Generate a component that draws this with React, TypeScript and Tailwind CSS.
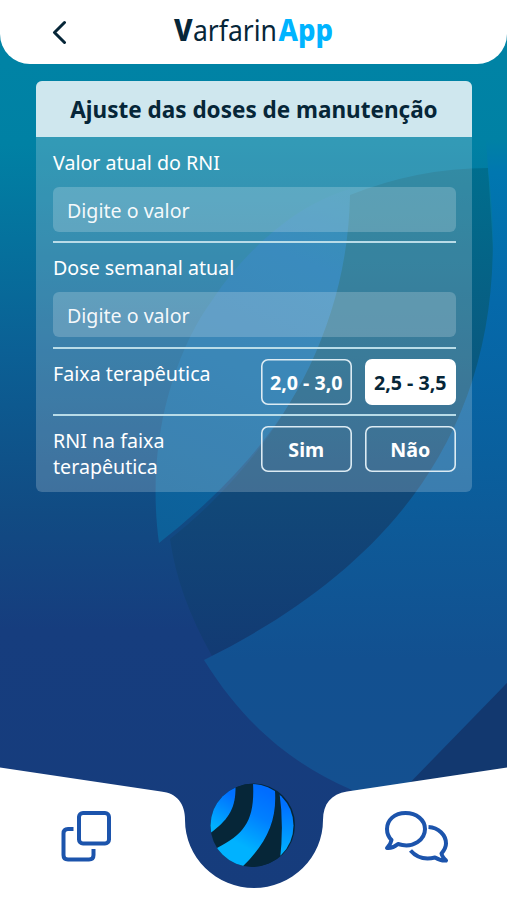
import type { ReactNode } from "react";

function Backdrop() {
  return (
    <svg className="absolute inset-0" width="507" height="900" viewBox="0 0 507 900" fill="none">
      <defs>
        <linearGradient id="sea" x1="0" y1="0" x2="0" y2="900" gradientUnits="userSpaceOnUse">
          <stop offset="0.07" stopColor="#0083a5" />
          <stop offset="0.16" stopColor="#0081a4" />
          <stop offset="0.39" stopColor="#0b6095" />
          <stop offset="0.57" stopColor="#114b83" />
          <stop offset="0.7" stopColor="#163d7e" />
          <stop offset="1" stopColor="#163c7c" />
        </linearGradient>
        <linearGradient id="stripeA" x1="330" y1="190" x2="180" y2="540" gradientUnits="userSpaceOnUse">
          <stop offset="0" stopColor="#0877b4" stopOpacity="0.3" />
          <stop offset="0.2" stopColor="#096fae" />
          <stop offset="1" stopColor="#0d6099" />
        </linearGradient>
        <linearGradient id="shade" x1="0" y1="168" x2="0" y2="660" gradientUnits="userSpaceOnUse">
          <stop offset="0" stopColor="#006e8e" />
          <stop offset="0.38" stopColor="#095a80" />
          <stop offset="0.67" stopColor="#114878" />
          <stop offset="1" stopColor="#123a73" />
        </linearGradient>
        <linearGradient id="stripeB" x1="0" y1="140" x2="0" y2="790" gradientUnits="userSpaceOnUse">
          <stop offset="0" stopColor="#0081a5" />
          <stop offset="0.05" stopColor="#0077b0" />
          <stop offset="0.25" stopColor="#0569aa" />
          <stop offset="0.5" stopColor="#0a5f9d" />
          <stop offset="0.62" stopColor="#0e5997" />
          <stop offset="0.8" stopColor="#125090" />
          <stop offset="1" stopColor="#145090" />
        </linearGradient>
      </defs>
      <rect width="507" height="900" fill="url(#sea)" />
      <path d="M350 189C290 206 238 260 211 302C176 350 145 440 159 543C235 483 353 372 350 189Z" fill="url(#stripeA)" />
      <path d="M488 168Q418 168 350 195C347 363 245 480 170 539Q178 596 212 656L400 560L500 360Z" fill="url(#shade)" />
      <path d="M486 140H507V683L375 830L352 790C290 763 244 724 204 660C390 568 520 422 488 168Z" fill="url(#stripeB)" />
      <path d="M507 683L400 793L507 780Z" fill="#12386f" />
    </svg>
  );
}

function Header() {
  return (
    <header className="relative flex h-16 items-center rounded-b-[30px] bg-white">
      <svg className="ml-[51px]" width="16" height="24" viewBox="0 0 16 24" fill="none" stroke="#062638" strokeWidth="3" strokeLinecap="round" strokeLinejoin="round">
        <path d="M13.5 2.500L3.500 12.500L13.5 22.500" />
      </svg>
      <svg className="ml-[106px]" width="170" height="44" viewBox="0 0 170 44" fontSize="29.3" fill="#062638">
        <text transform="translate(1 31) scale(.95 1)" fontWeight="800">V</text>
        <text transform="translate(20 31) scale(.905 1)">arfarin</text>
        <text transform="translate(105.500 31) scale(.94 1)" fontWeight="800" fill="#00b4ff">App</text>
      </svg>
    </header>
  );
}

function Field({ label }: { label: string }) {
  return (
    <label className="block h-[105.5px] border-b-2 border-[#b9dce8] pt-[12px]">
      <span className="block text-[19.65px] leading-[26px]">{label}</span>
      <input
        className="mt-[11px] block h-[45px] w-full rounded-[6px] bg-white/20 px-[14px] pt-0.5 text-[19.6px] placeholder:text-white/95"
        placeholder="Digite o valor"
      />
    </label>
  );
}

function Choice({ children, selected = false }: { children: ReactNode; selected?: boolean }) {
  return (
    <button
      className={
        selected
          ? "flex h-[46px] w-[90.5px] items-center justify-center whitespace-nowrap rounded-[7px] bg-white pt-0.5 text-[19.65px] font-bold text-[#062638]"
          : "flex h-[46px] w-[90.5px] items-center justify-center whitespace-nowrap rounded-[7px] pt-0.5 text-[19.65px] font-bold shadow-[inset_0_0_0_1.6px_#dcebf3]"
      }
    >
      {children}
    </button>
  );
}

function Emblem() {
  return (
    <svg width="88" height="86" viewBox="0 0 88 86">
      <defs>
        <linearGradient id="glow" x1="60" y1="10" x2="25" y2="75" gradientUnits="userSpaceOnUse">
          <stop offset="0" stopColor="#006dff" />
          <stop offset="0.35" stopColor="#0080ff" />
          <stop offset="0.8" stopColor="#00b2ff" />
        </linearGradient>
        <linearGradient id="glowLeft" x1="23" y1="12" x2="4" y2="44" gradientUnits="userSpaceOnUse">
          <stop offset="0" stopColor="#0070ff" />
          <stop offset="1" stopColor="#00b2ff" />
        </linearGradient>
        <linearGradient id="glowRight" x1="76" y1="22" x2="74" y2="72" gradientUnits="userSpaceOnUse">
          <stop offset="0" stopColor="#0070ff" />
          <stop offset="1" stopColor="#00b2ff" />
        </linearGradient>
        <clipPath id="orb"><circle cx="43" cy="42.500" r="41.500" /></clipPath>
      </defs>
      <circle cx="44.500" cy="42" r="41.500" fill="#062638" />
      <g clipPath="url(#orb)">
        <rect width="88" height="86" fill="#062638" />
        <path d="M0 0H26.500V7C26 27 18 38 0 51Z" fill="url(#glowLeft)" />
        <path d="M44 0H65L66 8C68 39 57 61 32 85L0 86L8 65C36 51 46 37 44 0Z" fill="url(#glow)" />
        <path d="M70.500 10Q75 42 71 77L88 60V10Z" fill="url(#glowRight)" />
      </g>
    </svg>
  );
}

function Footer() {
  return (
    <footer className="relative h-[133px]">
      <svg className="absolute inset-0" width="507" height="133" viewBox="0 0 507 133">
        <path d="M0 .5L161 24.500C177 26 185 37 185 53A69 68 0 0 0 323 53C323 37 331 27 347 24.500L507 .5V133H0Z" fill="white" />
      </svg>
      <nav className="relative flex pt-4">
        <button className="ml-[60px] mt-[27px] size-[52px]" aria-label="Copiar">
          <svg width="52" height="52" viewBox="0 0 52 52" fill="none" stroke="#1c54ac" strokeWidth="4">
            <rect x="19" y="3" width="30" height="30.500" rx="4" />
            <path d="M13.500 19H8Q3.500 19 3.500 23.500V45Q3.500 49.500 8 49.500H29Q33.500 49.500 33.500 45V39" />
          </svg>
        </button>
        <button className="ml-[97px] h-[86px] w-[88px]" aria-label="Início">
          <Emblem />
        </button>
        <button className="ml-[86px] mt-[27px] h-[54px] w-[66px]" aria-label="Conversas">
          <svg width="66" height="54" viewBox="0 0 66 54" fill="none" stroke="#1c54ac" strokeWidth="4" strokeLinejoin="round">
            <path d="M22.500 3C11.500 3 4 10 4 19C4 24 5.500 27 8.500 30C8 33.500 6.500 35 4 38C8.500 38.500 12 36.500 15 34C31 39 42 29 42 19C42 10 33.500 3 22.500 3Z" />
            <path d="M45.500 17C55.500 17.500 63 25 63 33.500C63 37.500 61 40.500 58.500 43.500C59 46.500 60.500 48 63 50.500C59 51 55.500 49.500 52 47.500C42 50 34 48 27.500 40.500" />
          </svg>
        </button>
      </nav>
    </footer>
  );
}

export default function App() {
  return (
    <div className="relative flex h-[900px] w-[507px] flex-col overflow-hidden font-['Noto_Sans',sans-serif] text-white">
      <Backdrop />
      <Header />
      <main className="relative mx-9 mt-[17px] h-[411px] w-[436px] overflow-hidden rounded-[6px] bg-white/20">
        <h1 className="flex h-14 items-center justify-center whitespace-nowrap bg-[#cfe7ee] pt-0.5 text-[22.5px] font-bold text-[#062638]">
          Ajuste das doses de manutenção
        </h1>
        <div className="pl-[17px] pr-[16.5px] pt-[0.6px]">
          <Field label="Valor atual do RNI" />
          <Field label="Dose semanal atual" />
          <div className="flex h-[67px] gap-[13.5px] border-b-2 border-[#b9dce8] pt-[10.4px]">
            <span className="grow pt-[2px] text-[19.65px] leading-[26px]">Faixa terapêutica</span>
            <Choice>2,0 - 3,0</Choice>
            <Choice selected>2,5 - 3,5</Choice>
          </div>
          <div className="flex gap-[13.5px] pt-[10.4px]">
            <span className="grow pt-[2px] text-[19.65px] leading-[26px]">RNI na faixa<br />terapêutica</span>
            <Choice>Sim</Choice>
            <Choice>Não</Choice>
          </div>
        </div>
      </main>
      <div className="grow" />
      <Footer />
    </div>
  );
}
